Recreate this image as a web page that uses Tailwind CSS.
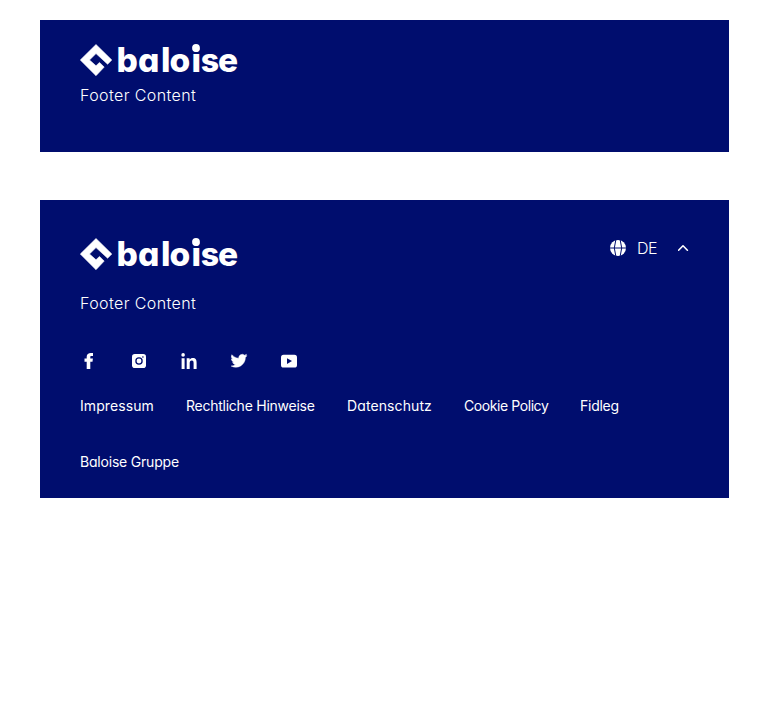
<!DOCTYPE html>
<html lang="de">
<head>
<meta charset="utf-8">
<title>Footer</title>
<script src="https://cdn.jsdelivr.net/npm/@tailwindcss/browser@4"></script>
</head>
<body class="bg-white px-10 pt-5 font-['Inter','Liberation_Sans',sans-serif] font-normal text-white [font-feature-settings:'cv11']">
  <svg class="hidden">
    <symbol id="logo" viewBox="0 0 160 34" overflow="visible">
      <path d="M16 .5L31.800 16L27.600 20.200L16 9.600L9.500 16L16 21.800L19.500 18.400L24.200 23.100L16 31.700L.3 16Z" fill="#fff" stroke="#fff" stroke-width="0.6" stroke-linejoin="round"/>
      <text x="36.400 58.100 81 89.500 111.500 120.700 138" y="27.5" font-size="33.5" font-weight="800" fill="#fff">baloi<tspan font-size="32">s</tspan>e</text>
      <circle cx="116" cy="3.900" r="3.900" fill="#fff"/>
    </symbol>
  </svg>

  <footer class="h-[132px] bg-[#000d6e] px-10 pt-6">
    <svg class="block h-[34px] w-40 overflow-visible" aria-label="baloise"><use href="#logo"/></svg>
    <p class="mt-[5px] text-base leading-6 font-light tracking-[0.4px]">Footer Content</p>
  </footer>

  <footer class="mt-12 h-[298px] bg-[#000d6e] px-10 pt-[38px]">
    <div class="flex items-start justify-between">
      <svg class="block h-[34px] w-40 overflow-visible" aria-label="baloise"><use href="#logo"/></svg>
      <button class="flex h-5 items-center text-base">
        <svg class="h-4 w-4" viewBox="0 0 16 16"><circle cx="8" cy="8" r="8" fill="#fff"/><path d="M0 8H16M5.800 0Q2.800 8 5.800 16M10.200 0Q13.200 8 10.200 16" fill="none" stroke="#000d6e" stroke-width="1"/></svg>
        <span class="ml-[11px] w-5 font-light tracking-[-0.6px]">DE</span>
        <svg class="ml-[21px] h-2 w-[11px]" viewBox="0 0 11 8"><path d="M.6 6.200L5 1.800L9.400 6.200" fill="none" stroke="#fff" stroke-width="1.600" stroke-linecap="round" stroke-linejoin="round"/></svg>
      </button>
    </div>
    <p class="mt-[19px] text-base leading-6 font-light tracking-[0.4px]">Footer Content</p>
    <div class="mt-[37px] flex gap-8">
      <svg class="h-[18px] w-[18px]" viewBox="0 0 18 18"><path d="M6.700 17V9.800H4.500V6.600H6.700V4.700C6.700 2.200 8.500 1 10.800 1L13 1.100V3.900H11.500C10.500 3.900 10.300 4.400 10.300 5.100V6.600H12.900L12.500 9.800H10.300V17Z" fill="#fff"/></svg>
      <svg class="h-[18px] w-[18px]" viewBox="0 0 18 18"><rect x="2" y="2" width="14" height="14" rx="2.800" fill="#fff"/><circle cx="9" cy="9" r="3.100" fill="none" stroke="#000d6e" stroke-width="1.300"/><circle cx="12.900" cy="5" r=".8" fill="#000d6e"/></svg>
      <svg class="h-[18px] w-[18px]" viewBox="0 0 18 18"><circle cx="3.100" cy="2.900" r="1.800" fill="#fff"/><path d="M1.600 6.200H4.600V17H1.600ZM6.700 6.200H9.600V7.700C10.300 6.500 11.400 6 12.800 6C15.800 6 16.600 7.900 16.600 10.700V17H13.600V11.500C13.600 9.800 13.400 8.600 11.800 8.600C10.200 8.600 9.700 9.800 9.700 11.400V17H6.700Z" fill="#fff"/></svg>
      <svg class="h-[18px] w-[18px]" viewBox="0 0 24 24"><path d="M22.500 4.800c-.8.400-1.500.6-2.300.8.9-.6 1.400-1.500 1.800-2.500-.9.500-1.700.9-2.700 1.100a4.700 4.700 0 0 0-7.700 4.100C8 8.100 4.700 6.300 2.500 3.600a4.500 4.500 0 0 0 1.400 6c-.7 0-1.400-.2-2-.5 0 2.200 1.500 4.100 3.600 4.500-.7.200-1.400.2-2 .1.600 1.800 2.200 3.100 4.200 3.100A9.100 9.100 0 0 1 1.500 18.700a12.800 12.800 0 0 0 19-11.300c.9-.7 1.500-1.600 2-2.600z" fill="#fff" stroke="#fff" stroke-width=".6"/></svg>
      <svg class="h-[18px] w-[18px]" viewBox="0 0 18 18"><rect x="1" y="2.700" width="16" height="12.800" rx="2.600" fill="#fff"/><path d="M7 6.300L12 9.100L7 11.900Z" fill="#000d6e"/></svg>
    </div>
    <nav class="mt-[26px] flex flex-wrap gap-x-8 gap-y-9 whitespace-nowrap text-sm leading-5">
      <a class="w-[74px] tracking-[0.08px]">Impressum</a>
      <a class="w-[129px] tracking-[-0.25px]">Rechtliche Hinweise</a>
      <a class="w-[85px] tracking-[0.1px]">Datenschutz</a>
      <a class="w-[84px] tracking-[-0.42px]">Cookie Policy</a>
      <a class="w-10 tracking-[-0.25px]">Fidleg</a>
      <a class="w-[100px] tracking-[-0.2px]">Baloise Gruppe</a>
    </nav>
  </footer>
</body>
</html>
